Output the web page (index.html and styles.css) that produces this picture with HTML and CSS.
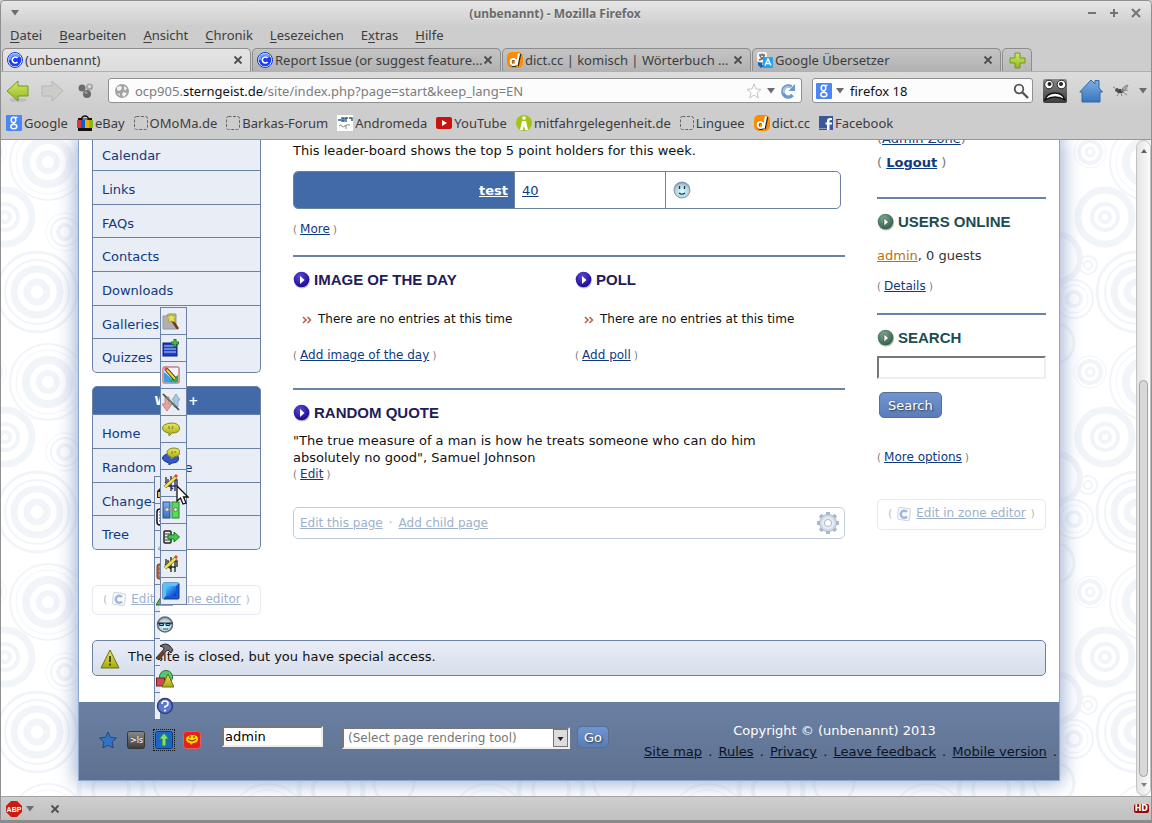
FILE: index.html
```html
<!DOCTYPE html>
<html lang="de">
<head>
  <meta charset="UTF-8">
  <meta name="viewport" content="width=device-width, initial-scale=1">
  <title>(unbenannt) - Mozilla Firefox</title>
  <link rel="stylesheet" href="styles.css">
</head>
<body>

<!-- shared icons -->
<svg class="defs" width="0" height="0" aria-hidden="true">
  <defs>
    <linearGradient id="gGreen" x1="0" y1="0" x2="0" y2="1"><stop offset="0" stop-color="#d5e86a"/><stop offset="1" stop-color="#94b81c"/></linearGradient>
    <linearGradient id="gBlue" x1="0" y1="0" x2="0" y2="1"><stop offset="0" stop-color="#7db0e6"/><stop offset="1" stop-color="#3a74ba"/></linearGradient>
    <linearGradient id="gSquare" x1="0" y1="0" x2="1" y2="1"><stop offset="0" stop-color="#4fd0f8"/><stop offset="1" stop-color="#0a35d0"/></linearGradient>
    <linearGradient id="gOlive" x1="0" y1="0" x2="0" y2="1"><stop offset="0" stop-color="#e8ea5c"/><stop offset="1" stop-color="#a5a80e"/></linearGradient>
    <linearGradient id="gDark" x1="0" y1="0" x2="0" y2="1"><stop offset="0" stop-color="#8a8a8a"/><stop offset="1" stop-color="#3c3c3c"/></linearGradient>
    <radialGradient id="gIndigo" cx=".4" cy=".3" r=".7"><stop offset="0" stop-color="#5a48d8"/><stop offset="1" stop-color="#1c0a8c"/></radialGradient>
    <radialGradient id="gTeal" cx=".4" cy=".3" r=".7"><stop offset="0" stop-color="#7aa88c"/><stop offset="1" stop-color="#33604a"/></radialGradient>
    <radialGradient id="gFace" cx=".5" cy=".6" r=".6"><stop offset="0" stop-color="#d5ffff"/><stop offset=".7" stop-color="#b4d0dc"/><stop offset="1" stop-color="#7888a4"/></radialGradient>
  </defs>
  <symbol id="ocportal" viewBox="0 0 16 16">
    <circle cx="8" cy="8" r="7.500" fill="#fff" stroke="#1230d8"/>
    <circle cx="8" cy="8" r="6.300" fill="#1a3ef0"/>
    <path d="M2.800 8a5.200 5.200 0 0 1 9.500-3" fill="none" stroke="#6aa8ff" stroke-width="2"/>
    <path d="M10.500 6A3 3 0 1 0 10.500 10" fill="none" stroke="#fff" stroke-width="1.600"/>
  </symbol>
  <symbol id="close" viewBox="0 0 10 10"><path d="M1.500 1.500l7 7m0-7l-7 7" stroke="#4e4e4e" stroke-width="1.800"/></symbol>
  <symbol id="caret" viewBox="0 0 8 6"><path d="M0 0h8L4 5.500z" fill="#6c6c6c"/></symbol>
  <symbol id="dict" viewBox="0 0 16 16">
    <rect width="16" height="16" rx="5" fill="#ff8c00"/>
    <ellipse cx="7" cy="10.500" rx="3" ry="3.300" fill="none" stroke="#222" stroke-width="2.500"/>
    <path d="M13 2l-2.500 12" stroke="#222" stroke-width="2.600"/>
    <ellipse cx="6.500" cy="10" rx="2.800" ry="3" fill="none" stroke="#fff" stroke-width="2"/>
    <path d="M12 1.500L9.500 13.500" stroke="#fff" stroke-width="2.200"/>
  </symbol>
  <symbol id="google" viewBox="0 0 16 16">
    <rect width="16" height="16" rx="1" fill="#4a86f5"/>
    <ellipse cx="7.500" cy="5" rx="2.300" ry="2.700" fill="none" stroke="#fff" stroke-width="1.500"/>
    <ellipse cx="7.800" cy="11.500" rx="3" ry="2.300" fill="none" stroke="#fff" stroke-width="1.500"/>
    <path d="M8.500 2.300h3M7 7.500l1.500 2" stroke="#fff" stroke-width="1.200"/>
  </symbol>
  <symbol id="blank" viewBox="0 0 14 14"><rect x=".5" y=".5" width="13" height="13" rx="2" fill="none" stroke="#666" stroke-dasharray="3 1.500"/></symbol>
  <symbol id="bullet-blue" viewBox="0 0 18 18">
    <circle cx="9" cy="9.500" r="8" fill="#9a98b0" opacity=".6"/><circle cx="8.500" cy="8.500" r="7.800" fill="url(#gIndigo)"/>
    <path d="M7 5l4.500 4L7 13z" fill="#fff"/>
  </symbol>
  <symbol id="bullet-green" viewBox="0 0 18 18">
    <circle cx="9" cy="9.500" r="8" fill="#8a9a90" opacity=".7"/><circle cx="8.500" cy="8.500" r="7.800" fill="url(#gTeal)"/>
    <path d="M7 5l4.500 4L7 13z" fill="#fff" stroke="#444" stroke-width=".6"/>
  </symbol>
  <symbol id="zone" viewBox="0 0 14 14">
    <rect x="1" y="1" width="12" height="12" rx="2" fill="#fafbfd" stroke="#cfd3da" transform="rotate(6 7 7)"/>
    <path d="M10 5A3.500 3.500 0 1 0 10 9.500" fill="none" stroke="#9db8e4" stroke-width="2.500"/>
  </symbol>
</svg>

<header class="chrome">
  <div class="titlebar">
    <svg width="8" height="6"><use href="#caret"/></svg>
    <span class="window-title">(unbenannt) - Mozilla Firefox</span>
    <span class="window-buttons">
      <svg width="10" height="10"><path d="M1 5h8" stroke="#747474" stroke-width="2"/></svg>
      <svg width="10" height="10"><path d="M1 5h8M5 1v8" stroke="#747474" stroke-width="2"/></svg>
      <svg width="10" height="10"><path d="M1 1l8 8m0-8L1 9" stroke="#747474" stroke-width="2"/></svg>
    </span>
  </div>

  <nav class="menubar">
    <a href="#"><u>D</u>atei</a>
    <a href="#"><u>B</u>earbeiten</a>
    <a href="#"><u>A</u>nsicht</a>
    <a href="#"><u>C</u>hronik</a>
    <a href="#"><u>L</u>esezeichen</a>
    <a href="#">E<u>x</u>tras</a>
    <a href="#"><u>H</u>ilfe</a>
  </nav>

  <div class="tabs">
    <div class="tab active"><svg width="16" height="16"><use href="#ocportal"/></svg><span>(unbenannt)</span><button aria-label="Tab schließen"><svg width="10" height="10"><use href="#close"/></svg></button></div>
    <div class="tab"><svg width="16" height="16"><use href="#ocportal"/></svg><span>Report Issue (or suggest feature...</span><button aria-label="Tab schließen"><svg width="10" height="10"><use href="#close"/></svg></button></div>
    <div class="tab"><svg width="16" height="16"><use href="#dict"/></svg><span>dict.cc | komisch | Wörterbuch ...</span><button aria-label="Tab schließen"><svg width="10" height="10"><use href="#close"/></svg></button></div>
    <div class="tab">
      <svg width="16" height="16"><rect width="10" height="10" rx="2" fill="#f4f4f4"/><path d="M2 3h6M5 1.500v1.500M7.500 3Q6 7 2 8M3 4q2 4 5 4" stroke="#666" stroke-width="1.300" fill="none"/><rect x="6" y="5" width="10" height="11" rx="1" fill="#22a4f0"/><path d="M8 13.500L11 7l3 6.500M9 11.500h4" stroke="#fff" stroke-width="1.400" fill="none"/><path d="M1 10l4 1v2l2 1-3 2-3-3z" fill="#1560c0"/></svg>
      <span>Google Übersetzer</span><button aria-label="Tab schließen"><svg width="10" height="10"><use href="#close"/></svg></button></div>
    <button class="new-tab" aria-label="Neuer Tab"><svg width="17" height="17"><path d="M6 1h5v5h5v5h-5v5H6v-5H1V6h5z" fill="url(#gGreen)" stroke="#6f9a1c"/></svg></button>
  </div>

  <div class="navbar">
    <button class="back" aria-label="Zurück"><svg width="24" height="24"><ellipse cx="12" cy="21" rx="9" ry="2" fill="#aaa" opacity=".5"/><path d="M1 12L12 2v5h10v10H12v5z" fill="url(#gGreen)" stroke="#6f9a1c"/></svg></button>
    <button class="forward" aria-label="Vor"><svg width="24" height="24"><path d="M23 12L12 2v5H2v10h10v5z" fill="#ccccc9" stroke="#b6b6b2"/></svg></button>
    <button class="dots" aria-label="Extras"><svg width="16" height="16"><circle cx="4" cy="5" r="3.500" fill="#6c6c6c"/><circle cx="11.500" cy="4" r="3.500" fill="#a6a6a6"/><circle cx="11.500" cy="3.500" r="1.500" fill="#ddd"/><circle cx="9" cy="11" r="4" fill="#6a6a6a"/><circle cx="8" cy="9.500" r="1.500" fill="#999"/></svg></button>
    <div class="field url">
      <svg width="16" height="16"><circle cx="8" cy="8" r="7" fill="#a2a2a2"/><path d="M3 4l3-1 2 1-1 3-3 1-1-2zM10 3l3 2-2 3-1-2zM9 9l4 1-3 4-2-2zM3 10l3 1v2z" fill="#f2f2f2"/></svg>
      <span class="address">ocp905.<b>sterngeist.de</b>/site/index.php?page=start&amp;keep_lang=EN</span>
      <svg width="16" height="16"><path d="M8 1l2 5 5 .3-4 3.400L12.500 15 8 12l-4.500 3L5 9.700 1 6.300 6 6z" fill="#fff" stroke="#c4c4c4"/></svg>
      <svg width="8" height="6"><use href="#caret"/></svg>
      <svg width="16" height="16"><path d="M12.500 12A5.500 5.500 0 1 1 11.500 4" fill="none" stroke="#6a9acc" stroke-width="3.500"/><path d="M15 1v7H8.500z" fill="#6a9acc"/><path d="M3.500 10A5 5 0 0 1 11 4.500" fill="none" stroke="#a8c8e8" stroke-width="1.500"/></svg>
    </div>
    <div class="field search">
      <svg width="16" height="16"><use href="#google"/></svg>
      <svg width="8" height="6"><use href="#caret"/></svg>
      <input type="text" value="firefox 18" aria-label="Websuche">
      <svg width="16" height="16"><circle cx="6" cy="6" r="4.300" fill="none" stroke="#555" stroke-width="1.800"/><path d="M9 9l6 6" stroke="#555" stroke-width="2.400"/></svg>
    </div>
    <svg class="face" width="24" height="24"><rect width="24" height="24" rx="2" fill="url(#gDark)"/><circle cx="6" cy="5.500" r="4.300" fill="#fff" stroke="#222"/><circle cx="18.500" cy="5.500" r="4.300" fill="#fff" stroke="#222"/><circle cx="6.500" cy="5" r="2" fill="#222"/><circle cx="18" cy="5" r="2" fill="#222"/><path d="M2 21Q4 14 12 14t10 7q-5-3-10-3T2 21z" fill="#fff" stroke="#111" stroke-width="1.300"/></svg>
    <svg class="home" width="24" height="24"><path d="M12 1l4 4V1.500h4V9l3.500 4H21v10H3V13H.8z" fill="url(#gBlue)" stroke="#2f68a8"/></svg>
    <svg class="fly" width="16" height="15"><ellipse cx="7" cy="8" rx="3.500" ry="2" fill="#444"/><circle cx="4" cy="7" r="2" fill="#555"/><path d="M8 7l4-4 3-1-2 4zM8 8l7-1M6 10l-2 3M8 10l1 3M10 9l4 3M2 5L0 4" stroke="#888" fill="#aaa"/></svg>
    <svg width="8" height="6"><use href="#caret"/></svg>
  </div>

  <nav class="bookmarks">
    <a href="#"><svg width="16" height="16"><use href="#google"/></svg>Google</a>
    <a href="#"><svg width="16" height="16"><path d="M1 3h14v13H1z" fill="#111"/><path d="M0 5h4v8H0z" fill="#e53238"/><path d="M4 5h4v8H4z" fill="#0064d2"/><path d="M8 5h4v8H8z" fill="#f5af02"/><path d="M12 5h4v8h-4z" fill="#86b817"/><path d="M4.500 4Q5 1 8 1t3.500 3" fill="none" stroke="#111" stroke-width="1.300"/><path d="M5.500 4h5" stroke="#ddd"/></svg>eBay</a>
    <a href="#"><svg width="14" height="14"><use href="#blank"/></svg>OMoMa.de</a>
    <a href="#"><svg width="14" height="14"><use href="#blank"/></svg>Barkas-Forum</a>
    <a href="#"><svg width="16" height="16"><rect width="16" height="16" fill="#fff"/><path d="M1 5h3M5 3h2v3H5zM8 3h3M9 3v4M12 3h3v3" stroke="#2a5a88" stroke-width="1.400" fill="none"/><path d="M2 11q2-2 3 0t3 0q2-2 5-1M9 10v4" stroke="#888" fill="none"/></svg>Andromeda</a>
    <a href="#"><svg width="16" height="16"><rect y="2" width="16" height="12" rx="2" fill="#c8140c"/><path d="M6 5l5 3-5 3z" fill="#fff"/></svg>YouTube</a>
    <a href="#"><svg width="16" height="16"><circle cx="8" cy="8" r="8" fill="#a4c414"/><circle cx="8" cy="3" r="1.800" fill="#fff"/><path d="M6 6h4l2 9H9.300L8 11l-1.300 4H4z" fill="#fff"/></svg>mitfahrgelegenheit.de</a>
    <a href="#"><svg width="14" height="14"><use href="#blank"/></svg>Linguee</a>
    <a href="#"><svg width="16" height="16"><use href="#dict"/></svg>dict.cc</a>
    <a href="#"><svg width="14" height="14"><rect width="14" height="14" fill="#3b5998"/><path d="M10.500 14V8.500h2.500V6.500h-2.500V5q0-1 1.200-1H13V2h-2Q8 2 8 5v1.500H6.500v2H8V14z" fill="#fff"/><path d="M0 12h8v1H0z" fill="#8a9cc4"/></svg>Facebook</a>
  </nav>
</header>

<div class="viewport">
  <div class="page">
    <div class="columns">
      <aside class="left">
        <ul class="menu open-top">
          <li><a href="#">Calendar</a></li>
          <li><a href="#">Links</a></li>
          <li><a href="#">FAQs</a></li>
          <li><a href="#">Contacts</a></li>
          <li><a href="#">Downloads</a></li>
          <li><a href="#">Galleries</a></li>
          <li><a href="#">Quizzes</a></li>
        </ul>
        <h3 class="menu-title">Web +</h3>
        <ul class="menu">
          <li><a href="#">Home</a></li>
          <li><a href="#">Random page</a></li>
          <li><a href="#">Change-log</a></li>
          <li><a href="#">Tree</a></li>
        </ul>
        <p class="zone-editor">( <svg width="14" height="14"><use href="#zone"/></svg> <a href="#">Edit in zone editor</a> )</p>
      </aside>

      <main class="center">
        <p class="intro">This leader-board shows the top 5 point holders for this week.</p>
        <table class="leaders">
          <tr>
            <th><a href="#">test</a></th>
            <td><a href="#">40</a></td>
            <td><svg width="18" height="18"><circle cx="9" cy="9" r="8" fill="url(#gFace)" stroke="#8a98a8"/><path d="M6.500 5v3M11.500 5v3" stroke="#234" stroke-width="1.300"/><path d="M6 12q3 2.500 6 0" stroke="#234" fill="none" stroke-width="1.200"/></svg></td>
          </tr>
        </table>
        <p class="more">( <a href="#">More</a> )</p>

        <div class="pair">
          <section>
            <h2><svg width="18" height="18"><use href="#bullet-blue"/></svg>IMAGE OF THE DAY</h2>
            <p class="empty"><svg width="10" height="8"><path d="M1 1l3 3-3 3M5.500 1l3 3-3 3" fill="none" stroke="#c05a4a" stroke-width="1.500"/></svg>There are no entries at this time</p>
            <p class="more">( <a href="#">Add image of the day</a> )</p>
          </section>
          <section>
            <h2><svg width="18" height="18"><use href="#bullet-blue"/></svg>POLL</h2>
            <p class="empty"><svg width="10" height="8"><path d="M1 1l3 3-3 3M5.500 1l3 3-3 3" fill="none" stroke="#c05a4a" stroke-width="1.500"/></svg>There are no entries at this time</p>
            <p class="more">( <a href="#">Add poll</a> )</p>
          </section>
        </div>

        <section class="quote">
          <h2><svg width="18" height="18"><use href="#bullet-blue"/></svg>RANDOM QUOTE</h2>
          <p class="quote-text">"The true measure of a man is how he treats someone who can do him absolutely no good", Samuel Johnson</p>
          <p class="more">( <a href="#">Edit</a> )</p>
        </section>

        <div class="page-actions">
          <a href="#">Edit this page</a><span>·</span><a href="#">Add child page</a>
          <svg width="24" height="24"><path d="M12 1v22M1 12h22M4.200 4.200l15.600 15.600M19.800 4.200L4.200 19.800" stroke="#abb8cc" stroke-width="4"/><circle cx="12" cy="12" r="8.500" fill="#d2dcea" stroke="#abb8cc"/><circle cx="12" cy="12" r="5" fill="none" stroke="#e8eef6" stroke-width="2"/><circle cx="12" cy="12" r="3.500" fill="#fff" stroke="#abb8cc"/></svg>
        </div>
      </main>

      <aside class="right">
        <p class="account">(<a href="#">Admin Zone</a>)<br>( <a href="#"><b>Logout</b></a> )</p>
        <section>
          <h2><svg width="18" height="18"><use href="#bullet-green"/></svg>USERS ONLINE</h2>
          <p class="users"><a href="#">admin</a>, 0 guests</p>
          <p class="more">( <a href="#">Details</a> )</p>
        </section>
        <section>
          <h2><svg width="18" height="18"><use href="#bullet-green"/></svg>SEARCH</h2>
          <input class="search-box" type="text" aria-label="Search">
          <button class="button">Search</button>
          <p class="more">( <a href="#">More options</a> )</p>
        </section>
        <p class="zone-editor">( <svg width="14" height="14"><use href="#zone"/></svg> <a href="#">Edit in zone editor</a> )</p>
      </aside>
    </div>

    <p class="notice">
      <svg width="20" height="20"><path d="M10 1l9 18H1z" fill="url(#gOlive)" stroke="#6c6c18"/><path d="M10 7v6M10 14.500v2" stroke="#222" stroke-width="1.500"/></svg>
      The site is closed, but you have special access.
    </p>

    <footer class="footer">
      <div class="tools">
        <svg width="18" height="18"><path d="M9 1l2.500 5.300 6 .7-4.400 4 1.200 6L9 14.300 3.700 17l1.200-6L.5 7l6-.7z" fill="#2f74c8" stroke="#284878"/></svg>
        <svg width="18" height="18"><rect x=".5" y=".5" width="17" height="17" rx="2" fill="url(#gDark)" stroke="#333"/><text x="3" y="12" class="ls">&gt;ls</text></svg>
        <svg class="focused" width="18" height="18"><rect x=".5" y=".5" width="17" height="17" rx="2" fill="#1c66c8" stroke="#0c3a80"/><path d="M9 2l5 6h-3v7H7V8H4z" fill="#7ee070" stroke="#2c7a3c"/></svg>
        <svg width="18" height="18"><rect x=".5" y=".5" width="17" height="17" rx="3" fill="#e8201c" stroke="#e06060"/><path d="M9 4q6 0 6 4t-5 4l-2 2-1-2Q3 11 3 8t6-4z" fill="#ffd800"/><path d="M7 5v2M11 5v2M5 8.500q4 3 8 0" stroke="#802010" fill="none"/></svg>
      </div>
      <input class="user" type="text" value="admin" aria-label="Switch user">
      <select aria-label="Page rendering tool"><option>(Select page rendering tool)</option></select>
      <button class="button go">Go</button>
      <div class="legal">
        <p>Copyright © (unbenannt) 2013</p>
        <ul>
          <li><a href="#">Site map</a></li>
          <li><a href="#">Rules</a></li>
          <li><a href="#">Privacy</a></li>
          <li><a href="#">Leave feedback</a></li>
          <li><a href="#">Mobile version</a></li>
        </ul>
      </div>
    </footer>
  </div>

  <!-- admin menu -->
  <ul class="popup popup-main">
    <li><svg width="18" height="18"><path d="M1 10l4-4h6v11H1z" fill="#222"/><path d="M2 11h6v5H2z" fill="#e0b860"/></svg></li>
    <li><svg width="18" height="18"><rect x="1" y="1" width="12" height="16" rx="3" fill="#fff" stroke="#111" stroke-width="1.500"/><path d="M3 4h9M3 7h9M3 10h9M3 13h9" stroke="#222"/></svg></li>
    <li><svg width="18" height="18"><path d="M2 14L7 8v8z" fill="#e8d8a0" stroke="#999"/></svg></li>
    <li><svg width="18" height="18"><rect x="1" y="2" width="12" height="15" rx="2" fill="#b06a48" stroke="#7a4028"/><path d="M3 5h3M3 9h3M3 13h3" stroke="#e0a888"/></svg></li>
    <li><svg width="18" height="18"><path d="M0 16L8 3l9 13z" fill="#4cc44c" stroke="#256025"/></svg></li>
    <li><svg width="18" height="18"><circle cx="9" cy="8.500" r="7.500" fill="url(#gFace)" stroke="#5c6c7c" stroke-width="1.500"/><path d="M1 7h16M3 7.500h4.500v2h-4zM10 7.500h4.500l-1 2H10z" fill="#8ab0d8" stroke="#222"/><path d="M7 13h5" stroke="#345"/></svg></li>
    <li><svg width="18" height="18"><path d="M4 3q6-4 10 0l3 4-2 3-3-3-2 1-7 9-3-2 8-9-1-2z" fill="#707070" stroke="#222"/><path d="M7 8l3 2-7 7-2-2z" fill="#6e3c24"/></svg></li>
    <li><svg width="18" height="18"><circle cx="10" cy="7" r="6.500" fill="#58c870" stroke="#257038"/><rect x=".5" y="8" width="8" height="8" fill="#cc4c50" stroke="#782028"/><path d="M12 4l6 13H6z" fill="url(#gOlive)" stroke="#6c6c18"/></svg></li>
    <li><svg width="18" height="18"><circle cx="9" cy="9" r="7.500" fill="#5b78cc" stroke="#2c3c84" stroke-width="1.500"/><path d="M6 7q0-3 3-3t3 2.500-3 3v1.500M9 12.500v2" fill="none" stroke="#fff" stroke-width="1.600"/></svg></li>
  </ul>
  <ul class="popup popup-sub">
    <li><svg width="18" height="18"><path d="M1 4h3l2-2h8v15H1z" fill="#b0b0b0" stroke="#999"/><path d="M10 8l6 9" stroke="#6e3818" stroke-width="2.500"/><path d="M9 1l1.500 3L14 4l-2 3 1 3-4-1-3 1 1-3-2-3 3 0z" fill="#e8e050" stroke="#a8a020" stroke-width=".7"/></svg></li>
    <li><svg width="18" height="18"><rect x="1" y="4" width="14" height="13" fill="#1c40c0" stroke="#101c70"/><path d="M2 7h12M2 10h12M2 13h12" stroke="#b8d0ff" stroke-width="1.200"/><path d="M13 0v8M9 4h8" stroke="#207828" stroke-width="3"/><path d="M13 1v6M10 4h6" stroke="#66d060"/></svg></li>
    <li><svg width="18" height="18"><rect x="1" y="1" width="16" height="16" rx="1" fill="#f4f4ff" stroke="#b04848"/><path d="M2 16V6l13 11z" fill="#3aa0e0"/><path d="M6 16h10V9z" fill="#28b040"/><path d="M4 3l9 10" stroke="#222" stroke-width="4"/><path d="M4 3l9 10" stroke="#f2d038" stroke-width="2.400"/><path d="M3 2l2 2" stroke="#d84c30" stroke-width="3"/></svg></li>
    <li><svg width="18" height="18"><path d="M14 1l4 6h-2v7h-4V7h-2z" fill="#a8c8e8" stroke="#90a8c0"/><path d="M3 4h4v7h3l-5 7-5-7h3z" fill="#eaa0a0" stroke="#c08888"/><path d="M1 1l16 16" stroke="#444" stroke-width="1.700"/><path d="M4 4l10 9" stroke="#5c9068" stroke-width="1.500"/></svg></li>
    <li><svg width="18" height="18"><path d="M9 3q8 0 8.500 5T10 13l-3 3v-3Q.5 12 .5 8T9 3z" fill="url(#gOlive)" stroke="#83831c"/><path d="M7 6v3M10 6q2 1 0 3" stroke="#77771c" fill="none"/></svg></li>
    <li><svg width="18" height="18"><path d="M8 6q8 0 8.500 5T10 16l-3 2v-2Q.5 14 .5 11T8 6z" fill="#3058cc" stroke="#1c3484"/><path d="M11 1q7 0 7 4t-6 5l-3 2v-2Q5 9 5 5.500T11 1z" fill="url(#gOlive)" stroke="#83831c"/><path d="M10 4v3M13 4v2" stroke="#77771c"/></svg></li>
    <li><svg width="18" height="18"><path d="M4 3v6M9 2v15M13 5v12M3 8l8 7M6 12h8M6 5v7M12 6h3v6" stroke="#2b3264" stroke-width="1.400" fill="none"/><path d="M3 13L14 3" stroke="#55501c" stroke-width="3.600"/><path d="M3 13L14 3" stroke="#f6e04c" stroke-width="2.400"/><path d="M13 3l2-2" stroke="#e05030" stroke-width="3"/></svg></li>
    <li><svg width="18" height="18"><rect x="1" y="1" width="7" height="16" fill="url(#gBlue)" stroke="#204c98"/><rect x="10" y="1" width="7" height="16" fill="#58dc58" stroke="#20882c"/><path d="M5 8.500h9" stroke="#999" stroke-width="2"/><circle cx="5" cy="8.500" r="2" fill="#ddd" stroke="#777"/><circle cx="13.500" cy="8.500" r="2" fill="#cfe8cf" stroke="#777"/></svg></li>
    <li><svg width="18" height="18"><rect x="2" y="3" width="7" height="12" rx="1" fill="#eee" stroke="#222" stroke-width="1.500"/><path d="M3 6h5M3 9h5M3 12h5" stroke="#333"/><path d="M6 7h6V4l5.500 5-5.500 5v-3H6z" fill="#40c848" stroke="#1a7428"/></svg></li>
    <li><svg width="18" height="18"><path d="M4 4v6M9 2v15M13 5v12M3 9l6 5M6 12h8M6 5v7M12 6h3v6" stroke="#24361f" stroke-width="1.400" fill="none"/><path d="M3 13L14 3" stroke="#55501c" stroke-width="3.600"/><path d="M3 13L14 3" stroke="#f6e04c" stroke-width="2.400"/><path d="M13 3l2-2" stroke="#e05030" stroke-width="3"/></svg></li>
    <li><svg width="18" height="18"><rect x="1" y="1" width="16" height="16" rx="1" fill="#1758d8" stroke="#123c98"/><path d="M1 1h16l-3 3H4v10l-3 3z" fill="#58c4f4"/><rect x="4" y="4" width="10" height="10" fill="url(#gSquare)"/></svg></li>
  </ul>
  <svg class="cursor" width="13" height="20"><path d="M1 1v15l3.500-3 2.500 6 3-1-2.500-6H12z" fill="#fff" stroke="#111" stroke-width="1.300"/></svg>

  <div class="scrollbar">
    <svg width="6" height="4"><path d="M0 4h6L3 0z" fill="#606060"/></svg>
    <div class="thumb"></div>
    <svg width="6" height="4"><path d="M0 0h6L3 4z" fill="#808080"/></svg>
  </div>
</div>

<div class="statusbar">
  <svg width="16" height="16"><path d="M5 0h6l5 5v6l-5 5H5l-5-5V5z" fill="#cc1c10"/><text x="8" y="11" text-anchor="middle" class="abp">ABP</text></svg>
  <svg width="8" height="6"><use href="#caret"/></svg>
  <button aria-label="Leiste schließen"><svg width="10" height="10"><use href="#close"/></svg></button>
  <span class="hd">HD</span>
</div>

</body>
</html>
```
FILE: styles.css
```css
* {
  box-sizing: border-box;
}

body {
  margin: 0;
  height: 100vh;
  display: flex;
  flex-direction: column;
  overflow: hidden;
  background-color: #cdcdcd;
  border: 1px solid #8f8f8f;
  border-bottom: 3px solid #8a8a8a;
  border-radius: 5px 5px 0 0;
  font-family: "Noto Sans", "Open Sans", sans-serif;
  font-size: 13px;
  color: #3c3c3c;
}

svg {
  flex: none;
}

button {
  font-family: inherit;
  padding: 0;
  border: none;
  background: none;
}

p, h2, h3, ul {
  margin: 0;
  padding: 0;
}

ul {
  list-style: none;
}

.defs {
  position: absolute;
}

/* browser window */
.chrome {
  border-bottom: 1px solid #979797;
}

.titlebar {
  display: flex;
  align-items: center;
  height: 24px;
  padding: 0 10px;
  background: linear-gradient(#e6e6e6, #cfcfcf);
}

.window-title {
  flex: 1;
  text-align: center;
  font-size: 12px;
  font-weight: bold;
  color: #6a6a6a;
  text-shadow: 0 1px 0 #eee;
  padding-left: 4px;
}

.window-buttons {
  display: flex;
  gap: 12px;
}

.menubar {
  display: flex;
  gap: 17px;
  height: 23px;
  padding: 0 9px;
  line-height: 20px;
}

.menubar a, .bookmarks a {
  color: #3c3c3c;
  text-decoration: none;
}

.menubar u {
  text-underline-offset: 2px;
}

.tabs {
  display: flex;
  height: 24px;
  border-bottom: 1px solid #b0b0b0;
  padding-left: 1px;
  gap: 1px;
}

.tab {
  flex: 0 1 249px;
  min-width: 0;
  display: flex;
  align-items: center;
  height: 23px;
  gap: 2px;
  padding: 0 7px 0 4px;
  border: 1px solid #8c8c8c;
  border-bottom: none;
  border-radius: 5px 5px 0 0;
  background: linear-gradient(#c4c4c4, #b2b2b2);
}

.tab.active {
  background: linear-gradient(#e4e4e4, #dcdcdc);
}

.tab span {
  flex: 1;
  min-width: 0;
  white-space: nowrap;
}

.tab button {
  display: flex;
}

.new-tab {
  display: flex;
  align-items: center;
  justify-content: center;
  width: 30px;
  height: 23px;
  border: 1px solid #8c8c8c;
  border-bottom: none;
  border-radius: 5px 5px 0 0;
  background: linear-gradient(#c8c8c8, #b8b8b8);
}

.navbar {
  display: flex;
  align-items: center;
  height: 37px;
  padding: 0 4px 0 5px;
  gap: 10px;
  background: linear-gradient(#dcdcdc, #cdcdcd);
}

.navbar button {
  display: flex;
}

.dots {
  margin: 0 4px;
}

.field {
  display: flex;
  align-items: center;
  height: 25px;
  border: 1px solid #909090;
  border-radius: 3px;
  background-color: #fcfcfc;
  padding: 0 5px;
  gap: 5px;
}

.url {
  flex: 1;
}

.address {
  flex: 1;
  color: #7c7c7c;
}

.address b {
  font-weight: normal;
  color: #111;
}

.search {
  width: 221px;
  padding: 0 3px;
  gap: 4px;
}

.search input {
  flex: 1;
  min-width: 0;
  border: none;
  background: none;
  font: inherit;
  color: #111;
}

.home {
  margin-left: 2px;
}

.bookmarks {
  display: flex;
  align-items: center;
  height: 30px;
  padding: 0 5px 2px;
  gap: 9px;
}

.bookmarks a {
  display: flex;
  align-items: center;
  gap: 2px;
  white-space: nowrap;
}

/* web page area */
.viewport {
  position: relative;
  flex: 1;
  min-height: 0;
  overflow: hidden;
  padding: 0 91px 0 77px;
  font-family: "DejaVu Sans", sans-serif;
  font-size: 13px;
  line-height: 17px;
  color: #111;
  background-color: #fff;
  background-image: url("data:image/svg+xml,%3Csvg xmlns='http://www.w3.org/2000/svg' width='220' height='220' fill='none' stroke='%23f1f4f9'%3E%3Cg id='a'%3E%3Ccircle cx='47' cy='22' r='38' stroke-width='2'/%3E%3Ccircle cx='47' cy='22' r='32'/%3E%3Ccircle cx='47' cy='22' r='22' stroke-width='8'/%3E%3Ccircle cx='47' cy='22' r='9' stroke-width='6'/%3E%3Ccircle cx='4' cy='77' r='27' stroke-width='7'/%3E%3Ccircle cx='4' cy='77' r='13' stroke-width='4'/%3E%3Ccircle cx='4' cy='77' r='5' stroke-width='4'/%3E%3Ccircle cx='64' cy='92' r='19'/%3E%3Ccircle cx='64' cy='92' r='14' stroke-width='2'/%3E%3Ccircle cx='64' cy='92' r='7' stroke-width='4'/%3E%3Ccircle cx='36' cy='152' r='40' stroke-width='3'/%3E%3Ccircle cx='36' cy='152' r='32' stroke-width='2'/%3E%3Ccircle cx='36' cy='152' r='23' stroke-width='7'/%3E%3Ccircle cx='36' cy='152' r='10' stroke-width='7'/%3E%3Ccircle cx='209' cy='12' r='16'/%3E%3Ccircle cx='209' cy='12' r='11' stroke-width='4'/%3E%3Ccircle cx='209' cy='12' r='4' stroke-width='3'/%3E%3Ccircle cx='207' cy='125' r='9' stroke-width='2'/%3E%3Ccircle cx='207' cy='125' r='4' stroke-width='2'/%3E%3Ccircle cx='193' cy='159' r='19' stroke-width='2'/%3E%3Ccircle cx='193' cy='159' r='14'/%3E%3Ccircle cx='193' cy='159' r='7' stroke-width='4'/%3E%3Ccircle cx='175' cy='118' r='24' stroke-width='6'/%3E%3Ccircle cx='173' cy='203' r='20' stroke-width='3'/%3E%3Ccircle cx='110' cy='210' r='32' stroke-width='5'/%3E%3Ccircle cx='110' cy='210' r='18' stroke-width='4'/%3E%3C/g%3E%3Cuse href='%23a' x='220'/%3E%3Cuse href='%23a' x='-220'/%3E%3Cuse href='%23a' y='-220'/%3E%3Cuse href='%23a' y='220'/%3E%3C/svg%3E");
}

.viewport a {
  color: #0f3a80;
}

.page {
  background-color: #fff;
  border: 1px solid #8ba6cf;
  border-top: none;
  box-shadow: 0 0 18px 2px #98acd0;
}

.columns {
  display: grid;
  grid-template-columns: 169px minmax(0, 1fr) 169px;
  gap: 32px;
  padding: 0 13px;
}

.menu {
  border: 1px solid #6b82a6;
  border-top: none;
  border-radius: 0 0 5px 5px;
  background-color: #e9edf5;
}

.menu.open-top {
  margin-top: -3px;
}

.menu li {
  height: 34px;
  padding: 10px 9px 0;
  border-bottom: 1px solid #6b82a6;
}

.menu li:nth-child(3n), .menu li:last-child {
  height: 33px;
}

.menu li:last-child {
  border-bottom: none;
}

.menu a {
  text-decoration: none;
}

.menu-title {
  margin-top: 13px;
  padding: 6px 0 4px;
  border: 1px solid #6b82a6;
  border-radius: 5px 5px 0 0;
  background-color: #426aa9;
  color: #fff;
  font-size: 12px;
  text-align: center;
}

.zone-editor {
  display: flex;
  align-items: center;
  justify-content: center;
  gap: 5px;
  height: 30px;
  margin-top: 35px;
  padding-bottom: 2px;
  border: 1px solid #e6e8f2;
  border-radius: 5px;
  font-size: 10px;
  color: #b4b4b4;
  white-space: nowrap;
}

.zone-editor a, .page-actions a {
  color: #9db1cc;
}

.zone-editor a {
  font-size: 12px;
}

.intro {
  padding-top: 2px;
}

.leaders {
  width: calc(100% - 4px);
  height: 38px;
  margin: 12px 0;
  border: 1px solid #6b82a6;
  border-radius: 5px;
  border-spacing: 0;
  table-layout: fixed;
  overflow: hidden;
}

.leaders th, .leaders td {
  padding: 0 7px;
  border-left: 1px solid #6b82a6;
}

.leaders th {
  width: 220px;
  padding: 0 6px;
  border-left: none;
  background-color: #426aa9;
  text-align: right;
}

.leaders th a {
  color: #fff;
}

.leaders td:nth-child(2) {
  width: 151px;
}

.leaders svg {
  display: block;
}

.more {
  font-size: 10px;
  color: #777;
}

.more a {
  font-size: 12px;
}

h2 {
  display: flex;
  align-items: center;
  gap: 3px;
  font-family: "Liberation Sans", Arial, sans-serif;
  font-size: 15px;
  line-height: 18px;
  color: #231c58;
}

.pair {
  display: grid;
  grid-template-columns: 1fr 1fr;
  gap: 12px;
  margin-top: 17px;
  padding-top: 14px;
  border-top: 2px solid #6b82a6;
}

.empty {
  display: flex;
  align-items: center;
  gap: 6px;
  margin: 22px 0 19px;
  padding-left: 9px;
  font-size: 12px;
}

.quote {
  margin-top: 24px;
  padding-top: 14px;
  border-top: 2px solid #6b82a6;
}

.quote h2 {
  margin-bottom: 10px;
}

.quote-text {
  padding-right: 60px;
}

.page-actions {
  display: flex;
  align-items: center;
  gap: 6px;
  height: 32px;
  margin-top: 24px;
  padding: 0 4px 0 6px;
  border: 1px solid #c3ccdc;
  border-radius: 5px;
  font-size: 12px;
  color: #9db1cc;
}

.page-actions svg {
  margin-left: auto;
}

.account {
  margin-top: -13px;
  line-height: 24px;
  color: #777;
}

.right section {
  margin-top: 18px;
  padding-top: 14px;
  border-top: 2px solid #6b82a6;
}

.right .account + section {
  margin-top: 22px;
}

.right h2 {
  color: #1c4c54;
}

.users {
  margin: 16px 0 14px;
  color: #333;
}

.users a {
  color: #b8740c;
}

.search-box {
  display: block;
  width: 100%;
  height: 23px;
  margin: 9px 0 13px;
}

.search-box, .user, .footer select {
  border: 2px solid #777;
  border-right-color: #eee;
  border-bottom-color: #eee;
}

.button {
  padding: 0 8px;
  height: 26px;
  margin-left: 2px;
  border: 1px solid #566f98;
  border-radius: 5px;
  background: linear-gradient(#7295d0, #5a7db8);
  color: #fff;
  font-size: 13px;
  text-shadow: 1px 1px 2px #333;
}

.button + .more {
  margin-top: 31px;
}

.right .zone-editor {
  margin-top: 33px;
  height: 31px;
}

.notice {
  display: flex;
  align-items: center;
  gap: 8px;
  height: 36px;
  margin: 25px 13px 26px;
  padding: 0 7px 3px;
  border: 1px solid #6b82a6;
  border-radius: 5px;
  background: linear-gradient(#e9edf6, #d7dfec);
}

.notice svg {
  margin-top: 4px;
}

.footer {
  display: flex;
  align-items: flex-start;
  height: 78px;
  padding: 18px 0 0 20px;
  background: linear-gradient(#6a80a3, #5f7190);
}

.tools {
  display: flex;
  gap: 10px;
  padding-top: 11px;
}

.focused {
  outline: 1px dotted #111;
  outline-offset: 1px;
}

.ls {
  font: 8px "DejaVu Sans", sans-serif;
  fill: #fff;
}

.user, .footer select {
  font: 13px "DejaVu Sans", sans-serif;
  background-color: #fff;
}

.user {
  width: 101px;
  height: 21px;
  margin: 6px 0 0 21px;
  padding: 0 1px;
}

.footer select {
  width: 228px;
  height: 22px;
  margin: 7px 0 0 19px;
  padding: 0 4px;
  appearance: none;
  border-radius: 0;
  font-size: 12px;
  color: #777;
  background: #fff url("data:image/svg+xml,%3Csvg xmlns='http://www.w3.org/2000/svg' width='15' height='18'%3E%3Crect x='.5' y='.5' width='14' height='17' fill='%23ddd' stroke='%23777'/%3E%3Cpath d='M4.500 8h6l-3 4z' fill='%23222'/%3E%3C/svg%3E") right center no-repeat;
}

.go {
  height: 22px;
  padding: 0 6px;
  margin: 6px 0 0 7px;
}

.legal {
  flex: 1;
  white-space: nowrap;
  text-align: center;
  line-height: 21px;
  color: #fff;
  margin-left: 21px;
}

.legal p {
  padding-right: 20px;
}

.legal ul {
  display: flex;
  justify-content: flex-end;
}

.legal li::after {
  content: " . ";
  white-space: pre;
  color: #111;
  padding: 0 2px;
}

.legal li:last-child::after {
  content: " .";
}

.legal a {
  color: #0c1424;
}

/* menus that open over the page */
.popup {
  position: absolute;
  border-left: 1px solid #6b82a6;
}

.popup li {
  height: 27px;
  padding: 4px 1px;
  border-top: 1px solid #6b82a6;
  background-color: #e9edf5;
}

.popup svg {
  display: block;
}

.popup-main {
  left: 153px;
  top: 336px;
  width: 6px;
}

.popup-sub {
  left: 159px;
  top: 167px;
  width: 27px;
  border-right: 1px solid #6b82a6;
  border-bottom: 1px solid #6b82a6;
}

.cursor {
  position: absolute;
  left: 175px;
  top: 345px;
}

.scrollbar {
  position: absolute;
  top: 0;
  right: 0;
  bottom: 0;
  width: 15px;
  display: flex;
  flex-direction: column;
  align-items: center;
  padding: 8px 0;
  border: 1px solid #c2c2c2;
  border-radius: 8px;
  background: linear-gradient(90deg, #e4e4e4, #fafafa);
}

.thumb {
  width: 9px;
  height: 397px;
  margin: auto 0 6px;
  border: 1px solid #a4a4a4;
  border-radius: 5px;
  background-color: #d8d8d8;
}

.statusbar {
  display: flex;
  align-items: center;
  gap: 4px;
  height: 24px;
  padding: 0 2px 0 5px;
  border-top: 1px solid #a2a2a2;
  background: linear-gradient(#cecece, #c0c0c0);
}

.statusbar button {
  display: flex;
  margin-left: 12px;
}

.abp {
  font: bold 7px "Liberation Sans", sans-serif;
  fill: #fff;
}

.hd {
  margin-left: auto;
  padding: 0 1px;
  border-radius: 2px;
  background-color: #900c0c;
  color: #fff;
  font: bold 8px "DejaVu Sans", sans-serif;
}
```
